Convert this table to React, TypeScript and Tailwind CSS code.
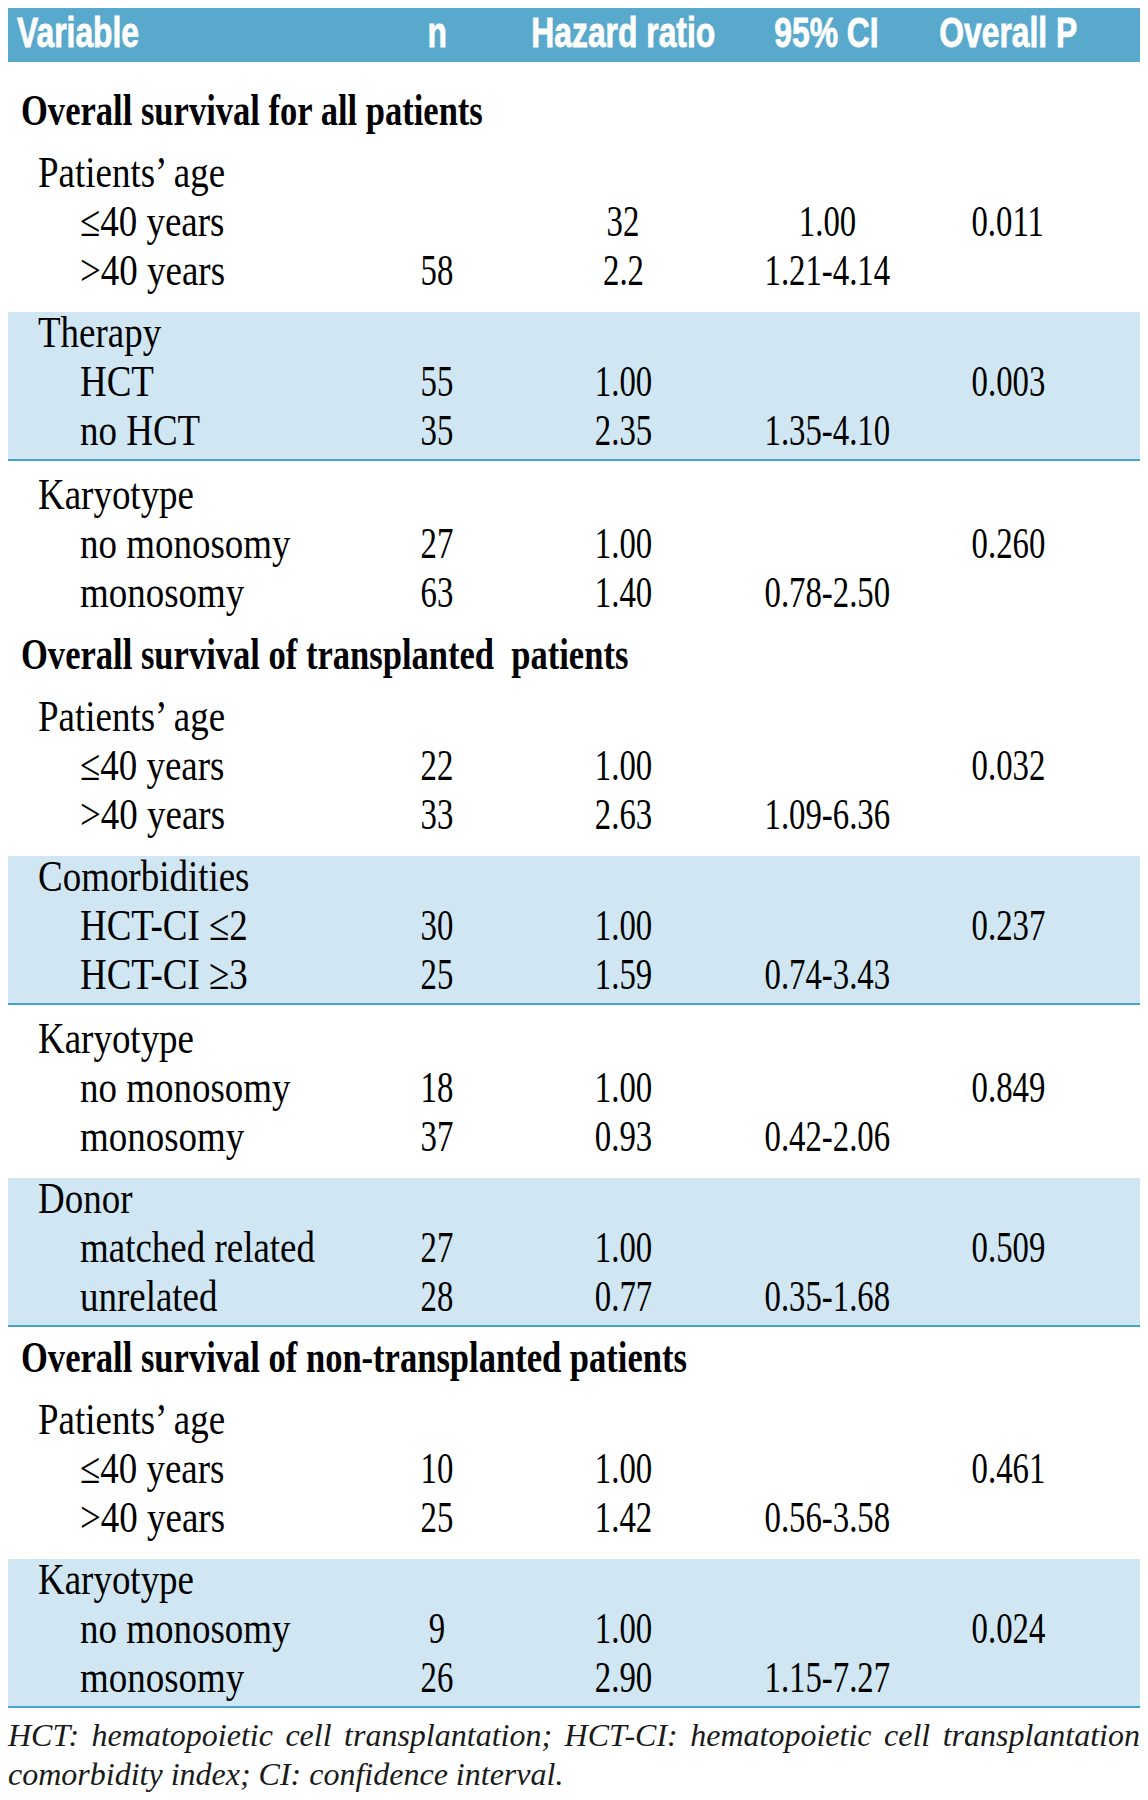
import React from "react";

type R = { label: string; level: 1 | 2; n?: string; hr?: string; ci?: string; p?: string };
type Block =
  | { kind: "title"; text: string; mt: string }
  | { kind: "group"; band: boolean; rows: R[] };

const blocks: Block[] = [
  { kind: "title", text: "Overall survival for all patients", mt: "mt-[28px]" },
  {
    kind: "group",
    band: false,
    rows: [
      { label: "Patients\u2019 age", level: 1 },
      { label: "\u226440 years", level: 2, hr: "32", ci: "1.00", p: "0.011" },
      { label: ">40 years", level: 2, n: "58", hr: "2.2", ci: "1.21-4.14" },
    ],
  },
  {
    kind: "group",
    band: true,
    rows: [
      { label: "Therapy", level: 1 },
      { label: "HCT", level: 2, n: "55", hr: "1.00", p: "0.003" },
      { label: "no HCT", level: 2, n: "35", hr: "2.35", ci: "1.35-4.10" },
    ],
  },
  {
    kind: "group",
    band: false,
    rows: [
      { label: "Karyotype", level: 1 },
      { label: "no monosomy", level: 2, n: "27", hr: "1.00", p: "0.260" },
      { label: "monosomy", level: 2, n: "63", hr: "1.40", ci: "0.78-2.50" },
    ],
  },
  { kind: "title", text: "Overall survival of transplanted\u00a0 patients", mt: "mt-[13px]" },
  {
    kind: "group",
    band: false,
    rows: [
      { label: "Patients\u2019 age", level: 1 },
      { label: "\u226440 years", level: 2, n: "22", hr: "1.00", p: "0.032" },
      { label: ">40 years", level: 2, n: "33", hr: "2.63", ci: "1.09-6.36" },
    ],
  },
  {
    kind: "group",
    band: true,
    rows: [
      { label: "Comorbidities", level: 1 },
      { label: "HCT-CI \u22642", level: 2, n: "30", hr: "1.00", p: "0.237" },
      { label: "HCT-CI \u22653", level: 2, n: "25", hr: "1.59", ci: "0.74-3.43" },
    ],
  },
  {
    kind: "group",
    band: false,
    rows: [
      { label: "Karyotype", level: 1 },
      { label: "no monosomy", level: 2, n: "18", hr: "1.00", p: "0.849" },
      { label: "monosomy", level: 2, n: "37", hr: "0.93", ci: "0.42-2.06" },
    ],
  },
  {
    kind: "group",
    band: true,
    rows: [
      { label: "Donor", level: 1 },
      { label: "matched related", level: 2, n: "27", hr: "1.00", p: "0.509" },
      { label: "unrelated", level: 2, n: "28", hr: "0.77", ci: "0.35-1.68" },
    ],
  },
  { kind: "title", text: "Overall survival of non-transplanted patients", mt: "mt-[10px]" },
  {
    kind: "group",
    band: false,
    rows: [
      { label: "Patients\u2019 age", level: 1 },
      { label: "\u226440 years", level: 2, n: "10", hr: "1.00", p: "0.461" },
      { label: ">40 years", level: 2, n: "25", hr: "1.42", ci: "0.56-3.58" },
    ],
  },
  {
    kind: "group",
    band: true,
    rows: [
      { label: "Karyotype", level: 1 },
      { label: "no monosomy", level: 2, n: "9", hr: "1.00", p: "0.024" },
      { label: "monosomy", level: 2, n: "26", hr: "2.90", ci: "1.15-7.27" },
    ],
  },
];

const GRID = "grid grid-cols-[372px_114px_258px_150px_212px_25px]";

function Num({ v }: { v?: string }) {
  return (
    <div className="flex justify-center whitespace-nowrap">
      {v ? <span className="inline-block shrink-0 scale-x-[0.745]">{v}</span> : null}
    </div>
  );
}

function Row({ r }: { r: R }) {
  return (
    <div className={`${GRID} h-[49px] text-[44px] leading-[42px]`}>
      <div className={r.level === 1 ? "pl-[30px] whitespace-nowrap" : "pl-[72px] whitespace-nowrap"}>
        <span className="inline-block origin-left scale-x-[0.84]">{r.label}</span>
      </div>
      <Num v={r.n} />
      <Num v={r.hr} />
      <Num v={r.ci} />
      <Num v={r.p} />
      <div />
    </div>
  );
}

function Header() {
  const cell = "flex justify-center whitespace-nowrap";
  const txt = "inline-block shrink-0 scale-x-[0.74] [-webkit-text-stroke:0.8px_white]";
  return (
    <div
      className={`${GRID} h-[54px] bg-[#59a9cc] text-white font-bold text-[43px] leading-[49px] font-['Liberation_Sans',Arial,sans-serif]`}
    >
      <div className="pl-[9px] whitespace-nowrap">
        <span className="inline-block origin-left scale-x-[0.74] [-webkit-text-stroke:0.8px_white]">Variable</span>
      </div>
      <div className={cell}>
        <span className={txt}>n</span>
      </div>
      <div className={cell}>
        <span className={txt}>Hazard ratio</span>
      </div>
      <div className={cell}>
        <span className={txt}>95% CI</span>
      </div>
      <div className={cell}>
        <span className={txt}>Overall P</span>
      </div>
      <div />
    </div>
  );
}

export default function App() {
  return (
    <div className="w-[1148px] min-h-[1800px] bg-white px-[8px] pt-[8px] text-black font-['Liberation_Serif','Times_New_Roman',serif]">
      <Header />
      {blocks.map((b, i) => {
        if (b.kind === "title") {
          return (
            <div key={i} className={`${b.mt} h-[49px] text-[44px] leading-[42px] pl-[13px] whitespace-nowrap font-bold`}>
              <span className="inline-block origin-left scale-x-[0.785]">{b.text}</span>
            </div>
          );
        }
        return (
          <div
            key={i}
            className={
              b.band
                ? "mt-[13px] bg-[#d0e7f3] border-b-2 border-[#47a4cd]"
                : "mt-[13px]"
            }
          >
            {b.rows.map((r, j) => (
              <Row key={j} r={r} />
            ))}
          </div>
        );
      })}
      <p className="mt-[8px] text-[32px] leading-[39px] italic text-justify [text-align-last:left] text-[#1a1a1a]">
        HCT: hematopoietic cell transplantation; HCT-CI: hematopoietic cell transplantation comorbidity index; CI: confidence interval.
      </p>
    </div>
  );
}
